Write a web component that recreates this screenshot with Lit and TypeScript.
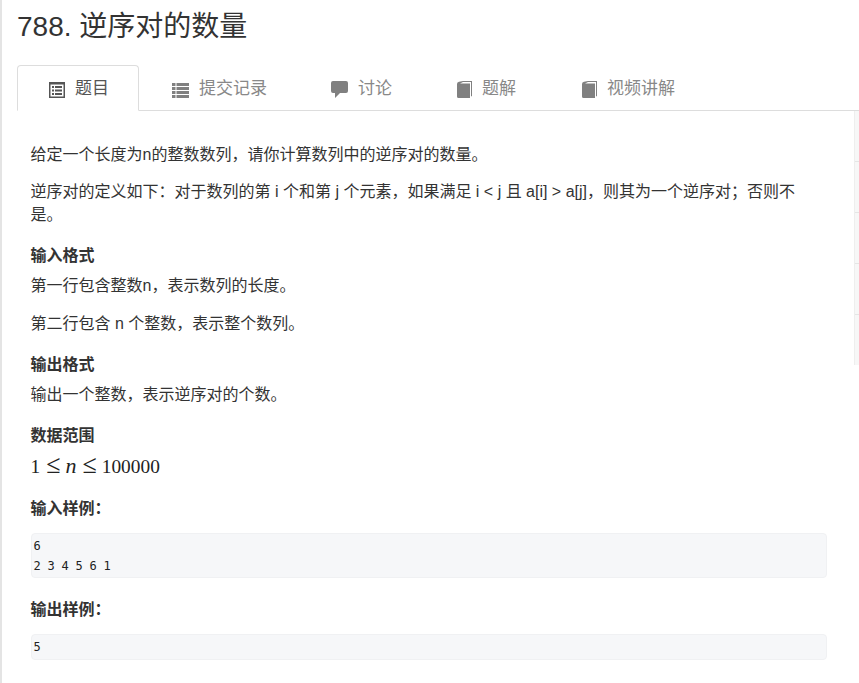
import { LitElement, html, css, svg } from "lit";
import { customElement } from "lit/decorators.js";

const listAlt = svg`<svg class="ic" width="16" height="16" viewBox="0 0 16 16"><path fill-rule="evenodd" d="M0 0H16V16H0ZM1.5 2.500V14.500H14.500V2.500ZM3 4H5V6H3ZM6 4H13V6H6ZM3 7.500H5V9.500H3ZM6 7.500H13V9.500H6ZM3 11H5V13H3ZM6 11H13V13H6Z"/></svg>`;
const list = svg`<svg class="ic" width="17" height="16" viewBox="0 0 17 16"><path d="M0 1H3.500V4H0ZM4.500 1H17V4H4.500ZM0 5H3.500V8H0ZM4.500 5H17V8H4.500ZM0 9H3.500V12H0ZM4.500 9H17V12H4.500ZM0 13H3.500V16H0ZM4.500 13H17V16H4.500Z"/></svg>`;
const comment = svg`<svg class="ic" width="17" height="17" viewBox="0 0 17 17"><path d="M2 0H15Q17 0 17 2V10Q17 12 15 12H9L4 17V12H2Q0 12 0 10V2Q0 0 2 0Z"/></svg>`;
const book = svg`<svg class="ic" width="15" height="17" viewBox="0 0 15 17"><path d="M0 3Q0 1 2 .8L6 0H15V15L14 15.500V1H6L3 2.500H13V17H1.500Q0 17 0 15.500Z"/></svg>`;

@customElement("app-root")
export class AppRoot extends LitElement {
  static styles = css`
    :host {
      display: block;
      height: 683px;
      overflow: hidden;
      border-left: 2px solid #e4e4e4;
      box-sizing: border-box;
      background: #fff;
      color: #333;
      font: 16px/22.86px "Liberation Sans", "Noto Sans CJK SC", sans-serif;
    }
    .title {
      margin: 0;
      padding: 10px 0 0 15px;
      height: 65px;
      box-sizing: border-box;
      font-size: 28px;
      line-height: 33px;
      font-weight: 400;
    }
    .tabs {
      display: flex;
      height: 46px;
      margin-left: 15px;
      box-sizing: border-box;
      border-bottom: 1px solid #ddd;
      color: #888;
      font-size: 17px;
    }
    .tab {
      display: flex;
      align-items: center;
      gap: 10px;
      box-sizing: border-box;
      height: 46px;
      padding: 3px 32px 0;
      fill: #808080;
      white-space: nowrap;
    }
    .tab.active {
      width: 122px;
      padding-left: 31px;
      padding-right: 0;
      border: 1px solid #ddd;
      border-bottom: 1px solid #fff;
      border-radius: 4px 4px 0 0;
      background: #fff;
      color: #555;
      fill: #555;
    }
    .t2 { margin-left: 1px; }
    .t4 { margin-left: 1px; }
    .t5 { margin-left: 2px; }
    .ic { flex: none; }
    .body {
      display: flex;
      justify-content: space-between;
    }
    .content {
      width: 796px;
      padding: 33px 0 0 28.5px;
      flex: none;
    }
    p {
      margin: 0 0 14.2px;
    }
    h4 {
      margin: 19.5px 0 9.2px;
      font-size: 16px;
      line-height: 20px;
      font-weight: 700;
    }
    .math {
      display: flex;
      align-items: baseline;
      font: 19.36px/24px "Liberation Serif", serif;
      color: #222;
      margin-top: -3px;
      margin-bottom: 20.2px;
    }
    .rel {
      font-size: 26px;
      line-height: 24px;
      margin: 0 5px 0 6px;
    }
    .math i { font-size: 22px; }
    pre {
      margin: 14px 0 21.5px;
      padding: 3.25px 2px 1.25px;
      background: #f6f7f9;
      border: 1px solid #f0f1f3;
      border-radius: 4px;
      color: #222;
      letter-spacing: -0.22px;
      font: 12px/19.5px "DejaVu Sans Mono", "Liberation Mono", monospace;
    }
    .side {
      width: 4px;
      flex: none;
      background: #f7f7f7;
      border-left: 1px solid #eee;
      height: 254px;
    }
    .side div {
      height: 50px;
      border-bottom: 1px solid #e5e5e5;
    }
  `;

  render() {
    return html`
      <h3 class="title">788. 逆序对的数量</h3>
      <div class="tabs">
        <div class="tab active">${listAlt}<span>题目</span></div>
        <div class="tab t2">${list}<span>提交记录</span></div>
        <div class="tab t3">${comment}<span>讨论</span></div>
        <div class="tab t4">${book}<span>题解</span></div>
        <div class="tab t5">${book}<span>视频讲解</span></div>
      </div>
      <div class="body">
        <div class="content">
          <p>给定一个长度为n的整数数列，请你计算数列中的逆序对的数量。</p>
          <p>逆序对的定义如下：对于数列的第 i 个和第 j 个元素，如果满足 i &lt; j 且 a[i] &gt; a[j]，则其为一个逆序对；否则不是。</p>
          <h4>输入格式</h4>
          <p>第一行包含整数n，表示数列的长度。</p>
          <p>第二行包含 n 个整数，表示整个数列。</p>
          <h4>输出格式</h4>
          <p>输出一个整数，表示逆序对的个数。</p>
          <h4>数据范围</h4>
          <div class="math"><span>1</span><span class="rel">≤</span><i>n</i><span class="rel">≤</span><span>100000</span></div>
          <h4>输入样例：</h4>
          <pre>6
2 3 4 5 6 1</pre>
          <h4>输出样例：</h4>
          <pre>5</pre>
        </div>
        <div class="side"><div></div><div></div><div></div><div></div></div>
      </div>
    `;
  }
}
